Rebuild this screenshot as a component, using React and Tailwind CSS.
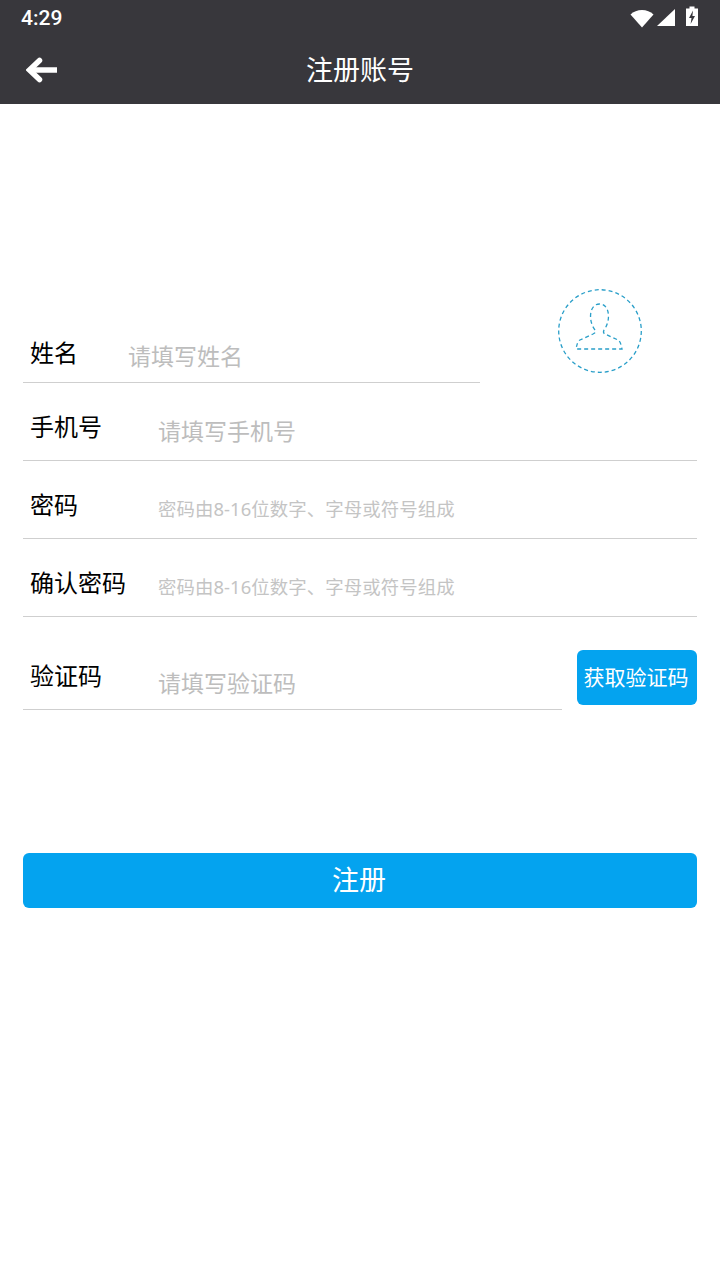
import React from 'react';

const font = "font-['Noto_Sans','Noto_Sans_CJK_SC',sans-serif]";

function Field({ label, placeholder, labelMb, inputClass, className = '' }) {
  return (
    <div className={`flex items-end border-b border-[#cfcfcf] ${className}`}>
      <span className={`pl-[7px] h-[34px] text-[24px] leading-[34px] text-black whitespace-nowrap ${labelMb}`}>{label}</span>
      <input
        readOnly
        placeholder={placeholder}
        className={`flex-1 min-w-0 h-[34px] bg-transparent outline-none placeholder:text-[#bdbdbd] ${inputClass}`}
      />
    </div>
  );
}

export default function App() {
  return (
    <div className={`${font} w-[720px] h-[1280px] bg-white overflow-hidden`}>
      <div className="bg-[#38373c] h-[104px] text-white">
        <div className="h-[36px] flex items-center justify-between pl-[21px] pr-[21px]">
          <span className="font-['Roboto',sans-serif] text-[21px] font-medium leading-none">4:29</span>
          <div className="flex items-center">
            <svg width="24" height="20" viewBox="0 0 24 20" fill="#fff">
              <path d="M0.500 6.500C3.500 3.500 7.500 2 12 2s8.500 1.500 11.500 4.500L12 19.500z" />
            </svg>
            <svg width="20" height="20" viewBox="0 0 20 20" fill="#fff" className="ml-[2px]">
              <path d="M19 1v17H1z" />
            </svg>
            <svg width="14" height="22" viewBox="0 0 14 22" className="ml-[9px] -mt-[2px]">
              <path fill="#fff" d="M1 2.500h3.500V0.500h5v2H13V20H1z" />
              <path fill="#38373c" d="M8 4.500 4 12h2.500L5.600 18l4.400-8H7.400z" />
            </svg>
          </div>
        </div>
        <div className="relative h-[68px] pb-[2px] flex items-center justify-center">
          <svg width="34" height="26" viewBox="0 0 34 26" className="absolute left-[26px] top-[21px]" fill="none" stroke="#fff" strokeWidth="5.500" strokeLinecap="round" strokeLinejoin="miter">
            <path d="M13.500 3.500 3.500 13l10 9.500" />
            <path d="M5 13h26" strokeLinecap="butt" />
          </svg>
          <h1 className="text-[27px] font-normal leading-none">注册账号</h1>
        </div>
      </div>

      <div className="px-[23px]">
        <div className="flex items-start pt-[185px]">
          <div className="w-[457px] h-[94px] flex flex-col justify-end">
            <Field
              label="姓名"
              placeholder="请填写姓名"
              labelMb="mb-[12px] w-[105px]"
              inputClass="mb-[9px] text-[23px]"
            />
          </div>
          <svg width="84" height="84" viewBox="0 0 84 84" fill="none" stroke="#2a9fc9" strokeWidth="1.300" strokeDasharray="4 3" className="ml-[78px]">
            <circle cx="42" cy="42" r="41.300" />
            <path d="M37 41c-7-9-6-26 4.500-26s11.500 17 4.500 26c-1 2 0 4 1 4l13 6c2 1 3 4 4 9H18c1-5 2-8 4-9l13-6c2-1 3-2 2-4z" />
          </svg>
        </div>

        <Field label="手机号" placeholder="请填写手机号" labelMb="mb-[16px]" inputClass="ml-[56px] mb-[12px] text-[23px]" className="h-[78px]" />
        <Field label="密码" placeholder="密码由8-16位数字、字母或符号组成" labelMb="mb-[16px]" inputClass="ml-[80px] mb-[13px] text-[18.400px] tracking-[0.100px] placeholder:text-[#c4c4c4]" className="h-[78px]" />
        <Field label="确认密码" placeholder="密码由8-16位数字、字母或符号组成" labelMb="mb-[16px]" inputClass="ml-[32px] mb-[13px] text-[18.400px] tracking-[0.100px] placeholder:text-[#c4c4c4]" className="h-[78px]" />

        <div className="flex items-end h-[93px]">
          <Field label="验证码" placeholder="请填写验证码" labelMb="mb-[16px]" inputClass="ml-[56px] mb-[9px] text-[23px]" className="h-[60px] w-[539px]" />
          <button className="ml-[15px] mb-[5px] w-[120px] h-[55px] pr-[2px] rounded-[6px] bg-[#04a3ef] text-white text-[21px] whitespace-nowrap">
            获取验证码
          </button>
        </div>

        <button className="block w-full h-[55px] mt-[143px] pr-[2px] rounded-[6px] bg-[#04a3ef] text-white text-[27px]">
          注册
        </button>
      </div>
    </div>
  );
}
